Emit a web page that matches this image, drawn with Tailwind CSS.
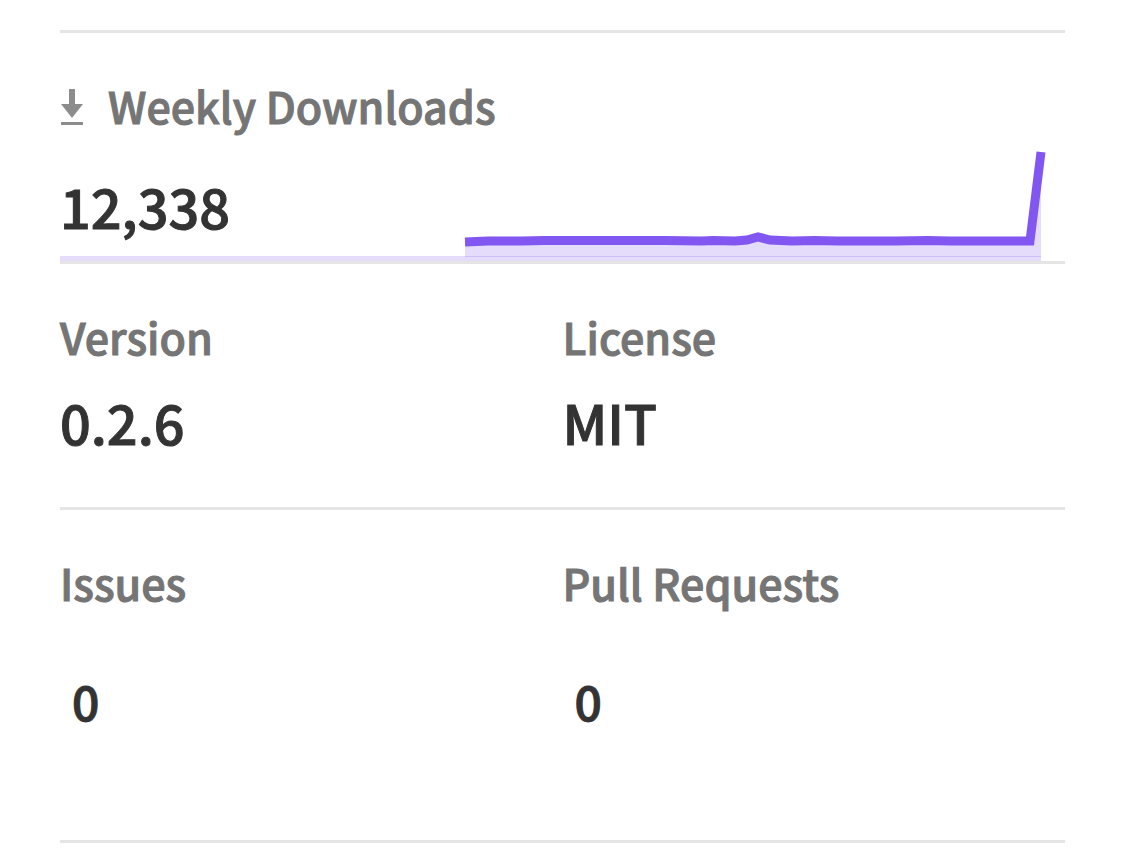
<!DOCTYPE html>
<html lang="en">
<head>
    <meta charset="UTF-8">
    <meta name="viewport" content="width=device-width, initial-scale=1.0">
    <title>Package Stats</title>
    <script src="https://cdn.jsdelivr.net/npm/@tailwindcss/browser@4"></script>
</head>
<body class="bg-white font-['Noto_Sans_CJK_SC','Noto_Sans',sans-serif] font-medium text-[#333333] antialiased">
    <!-- The 1px text stroke brings the medium weight up to semibold -->
    <main class="px-[60px] pt-[30px] [-webkit-text-stroke-width:1px]">
        <!-- Weekly downloads -->
        <section class="border-t-3 border-[#e5e5e5] pt-12">
            <h3 class="flex items-center gap-6 text-[43px] leading-[48px] text-[#757575]">
                <svg class="h-12 w-6 shrink-0" viewBox="0 0 24 48" fill="#8c8c8c" aria-hidden="true">
                    <path d="M9 8h6v15h8L12 37 1 23h8z" />
                    <path d="M1 41h22v3H1z" />
                </svg>
                Weekly Downloads
            </h3>
            <div class="mt-[22px] mr-6 -mb-[3px] flex items-end justify-between border-b-8 border-[#7a50e6]/20">
                <p class="mb-[18px] text-[54px] leading-[64px]">12,338</p>
                <svg class="-mb-px h-[106px] w-[576px] overflow-visible" viewBox="0 0 576 106" aria-label="Weekly downloads chart">
                    <path d="M0 91 L23 90 L57 90 L79 89.5 L200 89.5 L237 90 L248 89.5 L270 90 L282 89 L293 86 L305 89 L327 90 L350 89.5 L372 90 L430 90 L463 89.5 L485 90 L565 90 L576 1 V106 H0z" fill="#7a50e6" fill-opacity="0.2" />
                    <path d="M0 91 L23 90 L57 90 L79 89.5 L200 89.5 L237 90 L248 89.5 L270 90 L282 89 L293 86 L305 89 L327 90 L350 89.5 L372 90 L430 90 L463 89.5 L485 90 L565 90 L576 1" fill="none" stroke="#8257f1" stroke-width="9" />
                </svg>
            </div>
        </section>

        <!-- Version / License -->
        <section class="relative grid grid-cols-2 border-t-3 border-[#e5e5e5] pt-12 pb-[53px]">
            <div>
                <h3 class="text-[43px] leading-[48px] text-[#757575]">Version</h3>
                <p class="mt-[30px] text-[54px] leading-[64px]">0.2.6</p>
            </div>
            <div>
                <h3 class="text-[43px] leading-[48px] text-[#757575]">License</h3>
                <p class="mt-[30px] text-[54px] leading-[64px]">MIT</p>
            </div>
        </section>

        <!-- Issues / Pull requests -->
        <section class="grid grid-cols-2 border-y-3 border-[#e5e5e5] pt-12 pb-[108px]">
            <div>
                <h3 class="text-[43px] leading-[48px] text-[#757575]">Issues</h3>
                <p class="mt-[62px] pl-3 text-[48px] leading-[64px]">0</p>
            </div>
            <div>
                <h3 class="text-[43px] leading-[48px] text-[#757575]">Pull Requests</h3>
                <p class="mt-[62px] pl-3 text-[48px] leading-[64px]">0</p>
            </div>
        </section>
    </main>
</body>
</html>
